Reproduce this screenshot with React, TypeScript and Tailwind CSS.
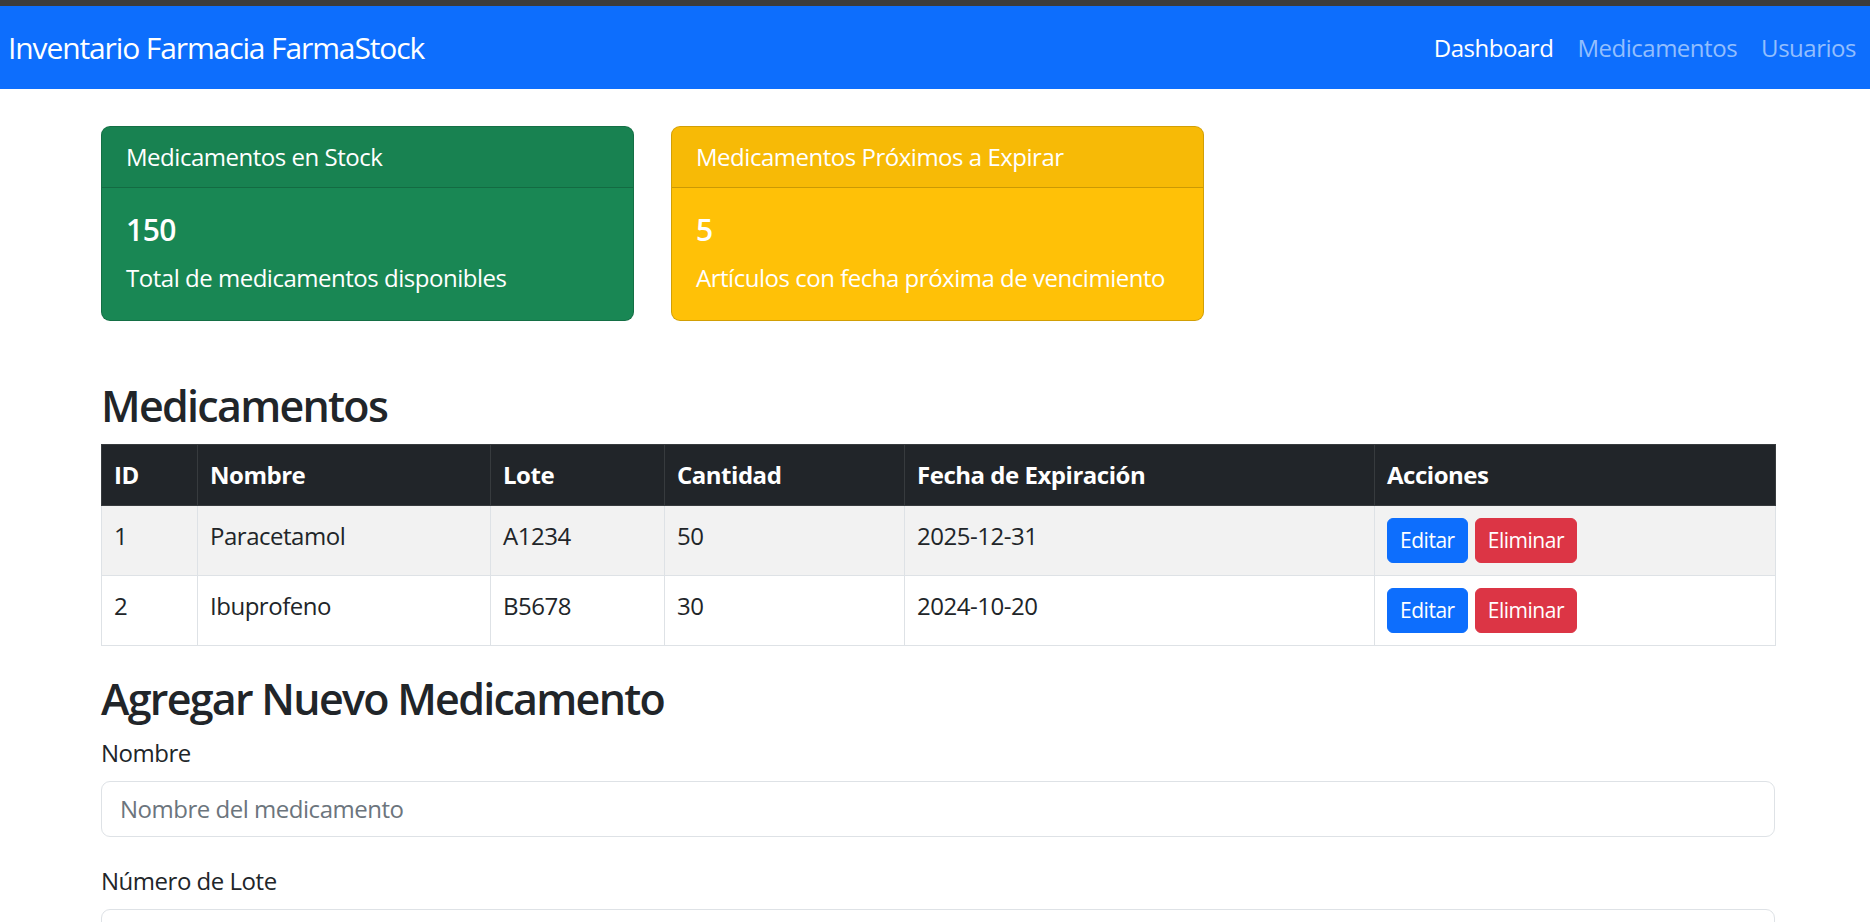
import React from "react";

const rows = [
  { id: 1, nombre: "Paracetamol", lote: "A1234", cantidad: 50, fecha: "2025-12-31" },
  { id: 2, nombre: "Ibuprofeno", lote: "B5678", cantidad: 30, fecha: "2024-10-20" },
];

export default function App() {
  return (
    <div className="min-h-screen bg-white text-[#212529] font-['Open_Sans','Noto_Sans',sans-serif] tracking-[-0.03em]">
      <div className="h-[6px] bg-[#3c3c3c]" />
      <nav className="flex h-[83px] items-center justify-between bg-[#0d6efd]">
        <span className="pl-[8px] text-[30px] leading-[45px] tracking-[-0.037em] text-white">Inventario Farmacia FarmaStock</span>
        <ul className="flex pr-[2px] text-[24px] leading-[36px]">
          <li className="px-[12px] text-white">Dashboard</li>
          <li className="px-[12px] text-[#92befe]">Medicamentos</li>
          <li className="px-[12px] text-[#92befe]">Usuarios</li>
        </ul>
      </nav>

      <main className="ml-[101px] w-[1674px]">
        <div className="mt-[37px] flex gap-[37px]">
          <div className="w-[533px] overflow-hidden rounded-[9px] border border-[rgba(0,0,0,0.175)] bg-[#198754] text-white">
            <div className="border-b border-[rgba(0,0,0,0.175)] bg-[rgba(0,0,0,0.03)] px-[24px] py-[12px] text-[24px] leading-[36px]">
              Medicamentos en Stock
            </div>
            <div className="p-[24px]">
              <h5 className="mb-[12px] text-[30px] font-semibold leading-[36px]">150</h5>
              <p className="whitespace-nowrap text-[24px] leading-[36px]">Total de medicamentos disponibles</p>
            </div>
          </div>
          <div className="w-[533px] overflow-hidden rounded-[9px] border border-[rgba(0,0,0,0.175)] bg-[#ffc107] text-white">
            <div className="border-b border-[rgba(0,0,0,0.175)] bg-[rgba(0,0,0,0.03)] px-[24px] py-[12px] text-[24px] leading-[36px]">
              Medicamentos Próximos a Expirar
            </div>
            <div className="p-[24px]">
              <h5 className="mb-[12px] text-[30px] font-semibold leading-[36px]">5</h5>
              <p className="whitespace-nowrap text-[24px] leading-[36px]">Artículos con fecha próxima de vencimiento</p>
            </div>
          </div>
        </div>

        <h2 className="mt-[56px] mb-[10px] text-[43px] font-semibold leading-[57px] tracking-[-0.04em]">Medicamentos</h2>
        <table className="w-full table-fixed border-collapse text-[24px] leading-[36px]">
          <colgroup>
            <col className="w-[96px]" />
            <col className="w-[293px]" />
            <col className="w-[174px]" />
            <col className="w-[240px]" />
            <col className="w-[470px]" />
            <col className="w-[401px]" />
          </colgroup>
          <thead>
            <tr className="bg-[#212529] text-white">
              {["ID", "Nombre", "Lote", "Cantidad", "Fecha de Expiración", "Acciones"].map((h) => (
                <th key={h} className="border border-[#373b3e] p-[12px] text-left font-bold">
                  {h}
                </th>
              ))}
            </tr>
          </thead>
          <tbody>
            {rows.map((r, i) => (
              <tr key={r.id} className={i === 0 ? "bg-[#f2f2f2]" : "bg-white"}>
                <td className="border border-[#dee2e6] p-[12px] align-top">{r.id}</td>
                <td className="border border-[#dee2e6] p-[12px] align-top">{r.nombre}</td>
                <td className="border border-[#dee2e6] p-[12px] align-top">{r.lote}</td>
                <td className="border border-[#dee2e6] p-[12px] align-top">{r.cantidad}</td>
                <td className="border border-[#dee2e6] p-[12px] align-top">{r.fecha}</td>
                <td className="border border-[#dee2e6] p-[12px] align-top">
                  <div className="flex gap-[7px]">
                    <button className="rounded-[6px] border border-[#0d6efd] bg-[#0d6efd] px-[12px] py-[6px] text-[21px] leading-[31px] text-white">
                      Editar
                    </button>
                    <button className="rounded-[6px] border border-[#dc3545] bg-[#dc3545] px-[12px] py-[6px] text-[21px] leading-[31px] text-white">
                      Eliminar
                    </button>
                  </div>
                </td>
              </tr>
            ))}
          </tbody>
        </table>

        <h2 className="mt-[24px] mb-[8px] text-[43px] font-semibold leading-[57px] tracking-[-0.04em]">Agregar Nuevo Medicamento</h2>
        <form>
          <div className="mb-[26px]">
            <label className="mb-[10px] block text-[24px] leading-[36px]">Nombre</label>
            <input
              className="block w-full rounded-[9px] border border-[#dee2e6] px-[18px] py-[9px] text-[24px] leading-[36px] placeholder:text-[#6c757d]"
              placeholder="Nombre del medicamento"
            />
          </div>
          <div className="mb-[24px]">
            <label className="mb-[10px] block text-[24px] leading-[36px]">Número de Lote</label>
            <input
              className="block w-full rounded-[9px] border border-[#dee2e6] px-[18px] py-[9px] text-[24px] leading-[36px] placeholder:text-[#6c757d]"
              placeholder="Número de lote"
            />
          </div>
        </form>
      </main>
    </div>
  );
}
